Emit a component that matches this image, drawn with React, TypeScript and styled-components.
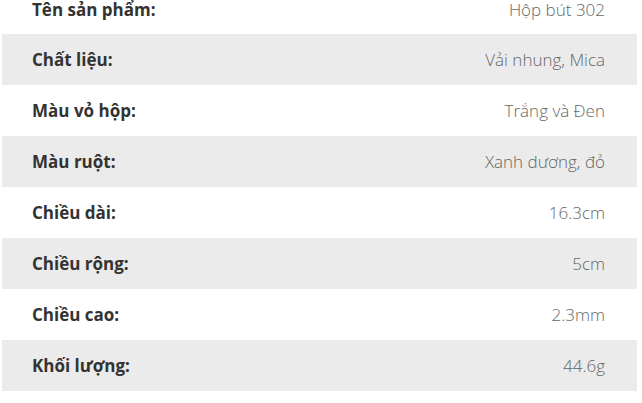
import styled, { createGlobalStyle } from 'styled-components'

const GlobalStyle = createGlobalStyle`
  html, body {
    margin: 0;
    padding: 0;
    background: #fff;
    overflow: hidden;
  }
`

const specs = [
  { label: 'Tên sản phẩm:', value: 'Hộp bút 302' },
  { label: 'Chất liệu:', value: 'Vải nhung, Mica' },
  { label: 'Màu vỏ hộp:', value: 'Trắng và Đen' },
  { label: 'Màu ruột:', value: 'Xanh dương, đỏ' },
  { label: 'Chiều dài:', value: '16.3cm' },
  { label: 'Chiều rộng:', value: '5cm' },
  { label: 'Chiều cao:', value: '2.3mm' },
  { label: 'Khối lượng:', value: '44.6g' },
]

const App = () => {
  return (
    <>
      <GlobalStyle />
      <SpecTable>
        {specs.map((spec, i) => (
          <SpecRow key={spec.label} $striped={i % 2 === 1}>
            <Label>{spec.label}</Label>
            <Value>{spec.value}</Value>
          </SpecRow>
        ))}
      </SpecTable>
    </>
  )
}

export default App

const SpecTable = styled.div`
  display: flex;
  flex-direction: column;
  margin: 0 5px 0 2px;
  font-family: 'Open Sans', 'Noto Sans', sans-serif;
  font-size: 17px;
  line-height: 20px;
`

// the top row is scrolled half out of view in the screenshot
const SpecRow = styled.div<{ $striped: boolean }>`
  box-sizing: border-box;
  display: flex;
  align-items: center;
  justify-content: space-between;
  height: 51px;
  padding: 0 32px 0 30px;
  background: ${({ $striped }) => ($striped ? '#ebebeb' : '#fff')};

  &:first-child {
    height: 34px;
    padding-bottom: 14px;
  }
`

const Label = styled.span`
  font-weight: 700;
  color: #333;
`

const Value = styled.span`
  font-weight: 300;
  color: #666;
`
